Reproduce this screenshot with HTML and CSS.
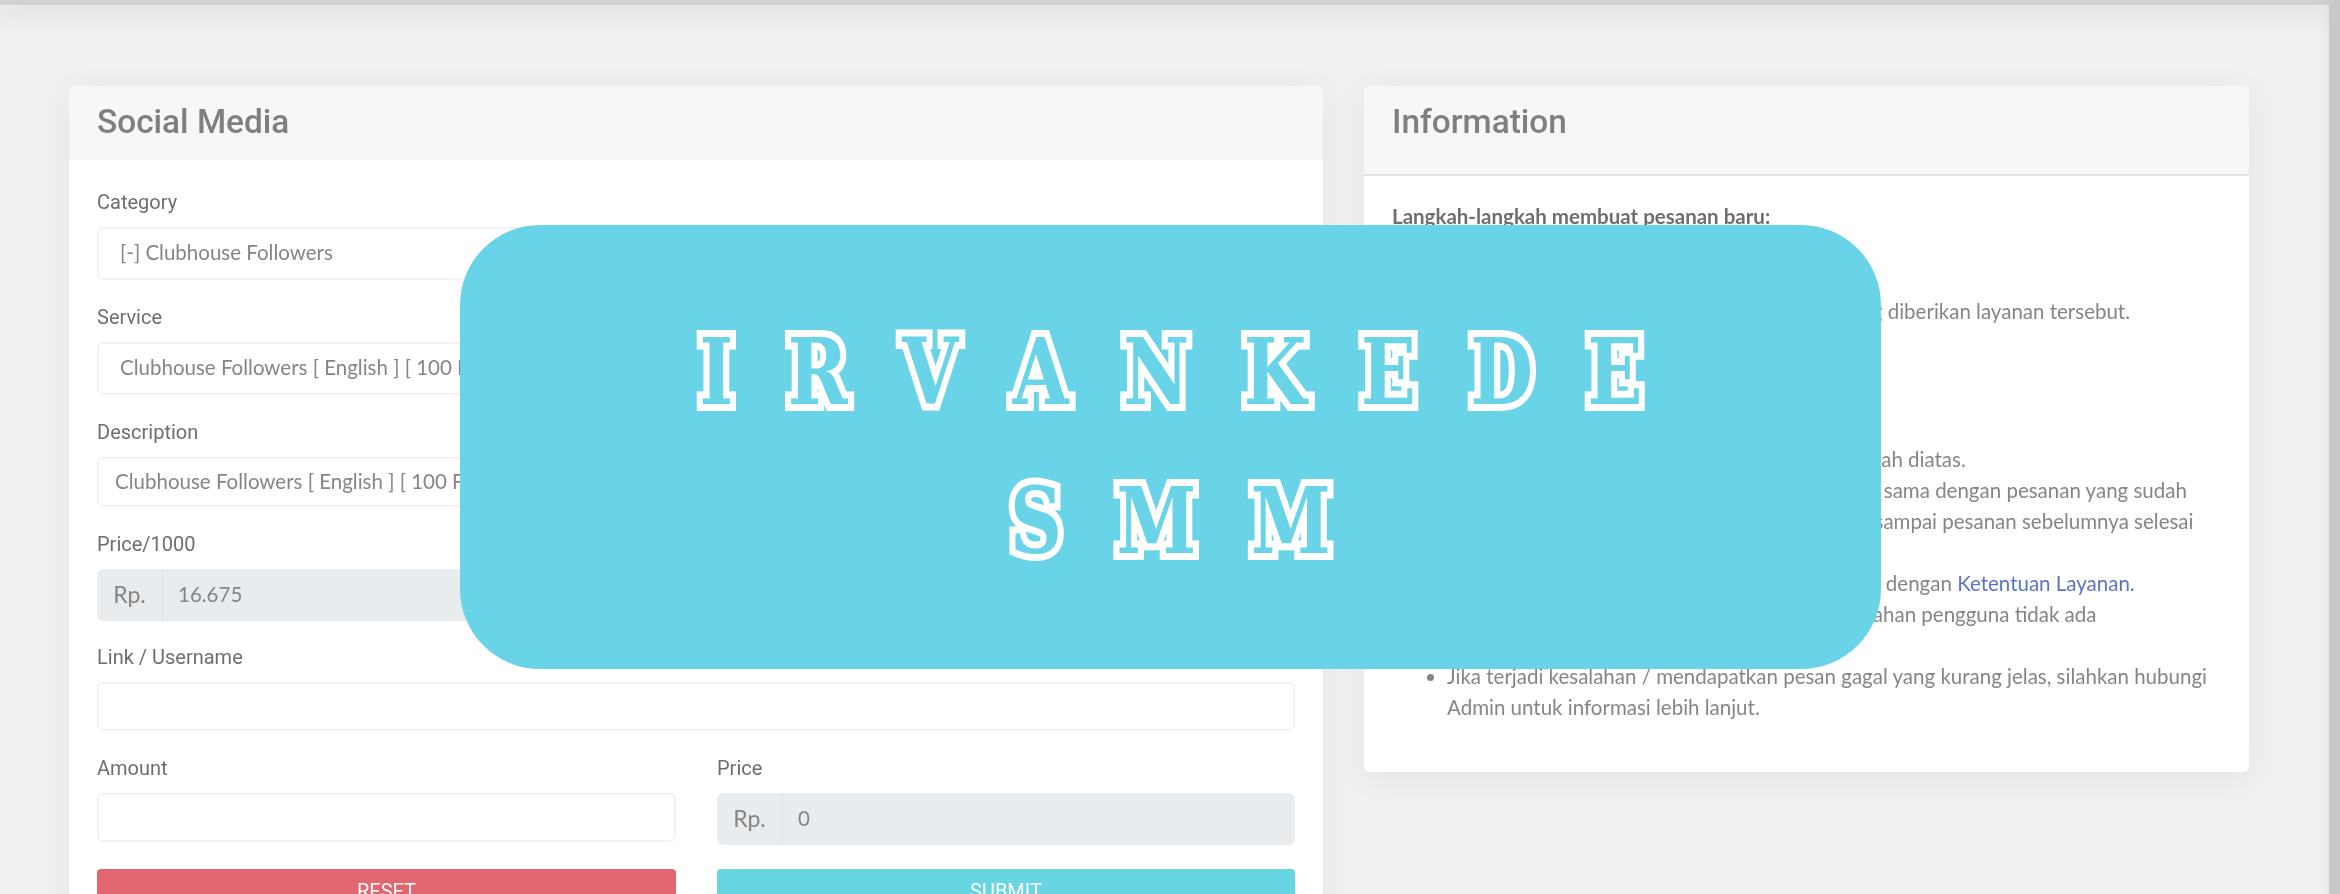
FILE: index.html
```html
<!DOCTYPE html>
<html lang="id">
<head>
<meta charset="utf-8">
<title>Irvankede SMM</title>
<link rel="stylesheet" href="styles.css">
</head>
<body>
<header class="topbar"></header>
<main class="layout">
  <section class="card card-form">
    <h2 class="card-head">Social Media</h2>
    <form class="card-body form">
      <div class="field">
        <label>Category</label>
        <div class="control">[-] Clubhouse Followers</div>
      </div>
      <div class="field">
        <label>Service</label>
        <div class="control">Clubhouse Followers [ English ] [ 100 Followers ]</div>
      </div>
      <div class="field">
        <label>Description</label>
        <div class="control control-desc">Clubhouse Followers [ English ] [ 100 Followers ]</div>
      </div>
      <div class="field">
        <label>Price/1000</label>
        <div class="group"><span class="addon">Rp.</span><span class="group-value">16.675</span></div>
      </div>
      <div class="field">
        <label>Link / Username</label>
        <div class="control control-empty"></div>
      </div>
      <div class="cols">
        <div class="field">
          <label>Amount</label>
          <div class="control control-empty"></div>
        </div>
        <div class="field">
          <label>Price</label>
          <div class="group"><span class="addon">Rp.</span><span class="group-value">0</span></div>
        </div>
      </div>
      <div class="cols">
        <button type="button" class="btn btn-reset">RESET</button>
        <button type="button" class="btn btn-submit">SUBMIT</button>
      </div>
    </form>
  </section>
  <section class="card card-info">
    <h2 class="card-head card-head-tall">Information</h2>
    <div class="card-body info">
      <p class="info-title">Langkah-langkah membuat pesanan baru:</p>
      <ul class="info-list">
        <li>Pilih salah satu Kategori.</li>
        <li>Pilih salah satu Layanan yang ingin dipesan.</li>
        <li>Masukkan Target Pesanan sesuai ketentuan yang diberikan layanan tersebut.</li>
        <li>Masukkan Jumlah Pesanan yang diinginkan.</li>
        <li>Klik Submit untuk membuat pesanan baru.</li>
      </ul>
      <p class="info-title">Ketentuan membuat pesanan baru:</p>
      <ul class="info-list">
        <li>Silahkan membuat pesanan sesuai langkah-langkah diatas.</li>
        <li>Jika ingin membuat pesanan dengan Target yang sama dengan pesanan yang sudah<br>pernah dipesan sebelumnya, mohon menunggu sampai pesanan sebelumnya selesai<br>diproses.</li>
        <li>Pastikan pesanan yang sudah dibuat telah sesuai dengan <a href="#">Ketentuan Layanan.</a><br>Pengembalian dana untuk pesanan karena kesalahan pengguna tidak ada<br>ketentuannya.</li>
        <li>Jika terjadi kesalahan / mendapatkan pesan gagal yang kurang jelas, silahkan hubungi<br>Admin untuk informasi lebih lanjut.</li>
      </ul>
    </div>
  </section>
</main>
<div class="scrollstrip"></div>
<div class="banner">
  <div class="banner-line">I R V A N K E D E</div>
  <div class="banner-line">S M M</div>
</div>
</body>
</html>
```
FILE: styles.css
```css
* { box-sizing: border-box; }
html, body { height: 100%; }
body {
  margin: 0;
  height: 894px;
  overflow: hidden;
  background: #f0f0f0;
  font-family: Lato, "Open Sans", sans-serif;
  color: #777;
  position: relative;
}
.topbar {
  height: 5px;
  background: #d2d2d2;
  box-shadow: 0 6px 22px rgba(0, 0, 0, .2);
}
.layout {
  display: flex;
  align-items: flex-start;
  gap: 41px;
  padding: 81px 0 0 69px;
  filter: blur(.5px);
}
.card {
  background: #fff;
  border-radius: 6px;
  box-shadow: 0 6px 34px rgba(0, 0, 0, .05);
  overflow: hidden;
}
.card-form { width: 1254px; }
.card-info { width: 885px; }
.card-head {
  margin: 0;
  height: 74px;
  padding: 17px 28px 0;
  background: #f7f7f7;
  font: 500 33.4px/37px Roboto, sans-serif;
  color: #7f7f7f;
}
.card-head-tall {
  height: 90px;
  border-bottom: 2px solid #e3e3e3;
}
.form { padding: 30px 28px 0; }
label {
  display: block;
  font: 400 20px/24px Roboto, sans-serif;
  color: #6e6e6e;
  margin-bottom: 13px;
}
.control {
  height: 53px;
  border: 2px solid #f1f2f2;
  border-radius: 6px;
  padding: 0 21px;
  margin-bottom: 25px;
  font-size: 20.5px;
  line-height: 47px;
  color: #858585;
  white-space: nowrap;
  overflow: hidden;
}
.control-desc { padding-left: 16px; height: 50px; line-height: 44px; }
.control-empty { height: 49px; }
.group {
  display: flex;
  height: 52px;
  background: #e9ecef;
  border-radius: 6px;
  margin-bottom: 24px;
  font-size: 20.5px;
  line-height: 50px;
  color: #858585;
}
.addon {
  width: 66px;
  text-align: center;
  font-size: 23px;
  border-right: 1px solid #dfe2e5;
}
.group-value { padding-left: 15px; }
.cols {
  display: grid;
  grid-template-columns: 579px 578px;
  gap: 41px;
}
.btn {
  height: 50px;
  border: 0;
  border-radius: 4px;
  color: #fff;
  font: 400 20px/44px Roboto, sans-serif;
  padding: 0 0 6px;
}
.btn-reset { background: #e2666f; }
.btn-submit { background: #67d5e2; }
.info {
  padding: 25px 28px 49px;
  font-size: 20.5px;
  line-height: 31px;
  color: #858585;
}
.info p { margin: 0; }
.info-title { font-weight: 700; color: #6e6e6e; }
.info-list {
  margin: 2px 0 22px;
  padding: 0 0 0 55px;
  list-style: disc;
}
.info-list:last-child { margin-bottom: 0; }
.info a { color: #5b73c9; text-decoration: none; }
.scrollstrip {
  position: absolute;
  top: 0;
  right: 0;
  bottom: 0;
  width: 11px;
  background: #c9c9c9;
  box-shadow: -4px 0 10px rgba(0, 0, 0, .04);
}
.banner {
  position: absolute;
  left: 460px;
  top: 225px;
  width: 1421px;
  height: 444px;
  border-radius: 80px;
  background: #69d3e7;
  display: flex;
  flex-direction: column;
  align-items: center;
  justify-content: center;
}
.banner-line {
  font-family: "DejaVu Serif Condensed", "DejaVu Serif", serif;
  font-stretch: condensed;
  font-weight: 700;
  font-size: 92px;
  line-height: 149px;
  word-spacing: 34px;
  white-space: nowrap;
  color: #69d3e7;
  -webkit-text-stroke: 14px #fff;
  paint-order: stroke fill;
  transform: scaleX(.87);
}
```
